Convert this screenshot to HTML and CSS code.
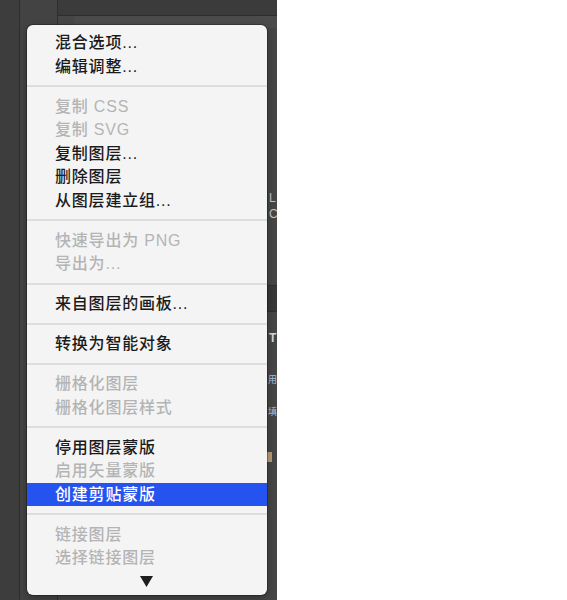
FILE: index.html
```html
<!DOCTYPE html>
<html lang="zh-CN">
  <head>
    <meta charset="UTF-8" />
    <meta name="viewport" content="width=device-width, initial-scale=1.0" />
    <title>图层菜单</title>
    <link rel="stylesheet" href="styles.css">
  </head>
  <body>
    <div class="app">
      <!-- Background panels of the editor -->
      <div class="col col-tools"></div>
      <div class="col col-side"></div>
      <div class="col col-main">
        <div class="topbar"></div>
        <div class="doc-tab"></div>
        <div class="gap gap-a"></div>
        <div class="peek">L</div>
        <div class="peek">C</div>
        <div class="gap gap-b"></div>
        <div class="band"></div>
        <div class="gap gap-c"></div>
        <div class="peek peek-bold">T</div>
        <div class="gap gap-d"></div>
        <div class="peek peek-cjk">用</div>
        <div class="gap gap-e"></div>
        <div class="peek peek-cjk">填</div>
        <div class="gap gap-f"></div>
        <div class="chip"></div>
      </div>

      <!-- Context menu -->
      <div class="menu">
        <div class="item">混合选项...</div>
        <div class="item">编辑调整...</div>
        <div class="sep"></div>
        <div class="item disabled">复制 CSS</div>
        <div class="item disabled">复制 SVG</div>
        <div class="item">复制图层...</div>
        <div class="item">删除图层</div>
        <div class="item">从图层建立组...</div>
        <div class="sep"></div>
        <div class="item disabled">快速导出为 PNG</div>
        <div class="item disabled">导出为...</div>
        <div class="sep"></div>
        <div class="item">来自图层的画板...</div>
        <div class="sep"></div>
        <div class="item">转换为智能对象</div>
        <div class="sep"></div>
        <div class="item disabled">栅格化图层</div>
        <div class="item disabled">栅格化图层样式</div>
        <div class="sep"></div>
        <div class="item">停用图层蒙版</div>
        <div class="item disabled">启用矢量蒙版</div>
        <div class="item active">创建剪贴蒙版</div>
        <div class="sep"></div>
        <div class="item disabled">链接图层</div>
        <div class="item disabled">选择链接图层</div>
        <div class="more">
          <svg width="13" height="11" viewBox="0 0 13 11"><polygon points="0,0 13,0 6.5,11" fill="#1e1e1e" /></svg>
        </div>
      </div>
    </div>
  </body>
</html>
```

FILE: styles.css
```css
:root {
  --app-bg: #454545;
  --app-dark: #3b3b3b;
  --app-line: #2e2e2e;
  --menu-bg: #f4f4f4;
  --menu-sep: #dddddd;
  --text: #1b1b1b;
  --text-off: #b4b4b4;
  --select: #2453ef;
}

* {
  margin: 0;
  padding: 0;
  box-sizing: border-box;
}

body {
  background: #ffffff;
  font-family: "Liberation Sans", "Noto Sans CJK SC", sans-serif;
}

.app {
  position: relative;
  width: 277px;
  height: 600px;
  display: grid;
  grid-template-columns: 20px 38px 1fr;
  background: var(--app-bg);
  overflow: hidden;
}

.col {
  height: 600px;
}

.col-tools {
  background: #3d3d3d;
  border-right: 1px solid var(--app-line);
}

.col-side {
  background: #434343;
  border-right: 1px solid var(--app-line);
}

.col-main {
  background: #464646;
  display: flex;
  flex-direction: column;
  border-right: 1px solid #333333;
}

.topbar {
  height: 16px;
  background: var(--app-dark);
  border-bottom: 1px solid var(--app-line);
}

.doc-tab {
  height: 12px;
  margin-left: 16px;
  background: #4b4b4b;
  border-radius: 4px 0 0 0;
}

.gap-a { height: 162px; }
.gap-b { height: 63px; }
.gap-c { height: 16px; }
.gap-d { height: 24px; }
.gap-e { height: 16px; }
.gap-f { height: 32px; }

.peek {
  height: 16px;
  line-height: 16px;
  padding-left: 211px;
  font-size: 12px;
  color: #c4c4c4;
  white-space: nowrap;
}

.peek-bold {
  height: 20px;
  line-height: 20px;
  font-weight: bold;
  color: #d8d8d8;
}

.peek-cjk {
  height: 16px;
  line-height: 16px;
  padding-left: 210px;
  font-family: "Noto Sans CJK SC", sans-serif;
  font-size: 9px;
  color: #a9c4e8;
}

.band {
  height: 27px;
  background: #383838;
  border-top: 1px solid var(--app-line);
  border-bottom: 1px solid var(--app-line);
}

.chip {
  width: 6px;
  height: 10px;
  margin-left: 208px;
  background: #b59a78;
}

/* Context menu */
.menu {
  position: absolute;
  left: 27px;
  top: 25px;
  width: 240px;
  height: 570px;
  padding-top: 6px;
  background: var(--menu-bg);
  border-radius: 6px;
  box-shadow: 0 0 0 1px rgba(0, 0, 0, 0.25), 0 3px 8px rgba(0, 0, 0, 0.3);
  overflow: hidden;
  font-size: 16px;
  font-weight: 500;
  letter-spacing: 0.8px;
}

.item {
  height: 23.5px;
  line-height: 23.5px;
  padding-left: 28px;
  color: var(--text);
  white-space: nowrap;
}

.item.disabled {
  color: var(--text-off);
}

.item.active {
  background: var(--select);
  color: #ffffff;
}

.sep {
  height: 2px;
  margin: 7px 0 7.5px;
  background: var(--menu-sep);
}

.more {
  display: flex;
  justify-content: center;
  margin-top: 6px;
  padding-right: 1px;
}

.more svg {
  display: block;
}
```
